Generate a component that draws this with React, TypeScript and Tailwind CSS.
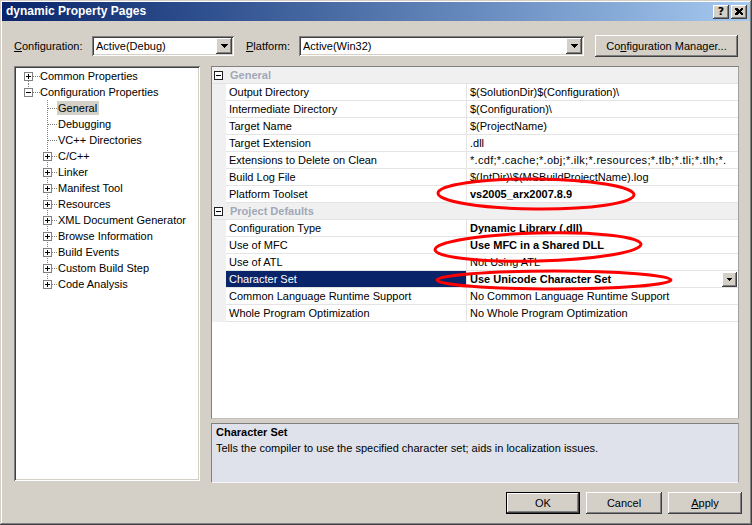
import React from "react";

const raised =
  "shadow-[inset_-1px_-1px_0_#404040,inset_1px_1px_0_#ffffff,inset_-2px_-2px_0_#808080,inset_2px_2px_0_#d4d0c8]";
const sunken =
  "shadow-[inset_1px_1px_0_#808080,inset_-1px_-1px_0_#ffffff,inset_2px_2px_0_#404040,inset_-2px_-2px_0_#d4d0c8]";

function Tri() {
  return (
    <svg width="7" height="4" shapeRendering="crispEdges">
      <rect x="0" y="0" width="7" height="1" fill="#000" />
      <rect x="1" y="1" width="5" height="1" fill="#000" />
      <rect x="2" y="2" width="3" height="1" fill="#000" />
      <rect x="3" y="3" width="1" height="1" fill="#000" />
    </svg>
  );
}

function Combo({ text, w }: { text: string; w: string }) {
  return (
    <div className={`${w} h-[20px] bg-white ${sunken} flex items-center pl-[4px] pr-[2px]`}>
      <span className="flex-1 truncate leading-[14px]">{text}</span>
      <div className={`w-[16px] h-[16px] bg-[#d4d0c8] ${raised} flex items-center justify-center`}>
        <Tri />
      </div>
    </div>
  );
}

function Box({ minus, x, color = "#808080" }: { minus?: boolean; x: number; color?: string }) {
  return (
    <>
      <rect x={x + 0.5} y={4.5} width={8} height={8} fill="#fff" stroke={color} />
      <rect x={x + 2} y={8} width={5} height={1} fill="#000" />
      {!minus && <rect x={x + 4} y={6} width={1} height={5} fill="#000" />}
    </>
  );
}

function TopRow({ label, minus, down }: { label: string; minus?: boolean; down?: boolean }) {
  return (
    <div className="h-[16px] flex items-center">
      <svg width="24" height="16" shapeRendering="crispEdges" className="shrink-0">
        {down ? (
          <line x1="12.5" y1="13" x2="12.5" y2="16" stroke="#808080" strokeDasharray="1 1" />
        ) : (
          <line x1="12.5" y1="0" x2="12.5" y2="4" stroke="#808080" strokeDasharray="1 1" />
        )}
        <line x1="17" y1="8.5" x2="24" y2="8.5" stroke="#808080" strokeDasharray="1 1" />
        <Box minus={minus} x={8} />
      </svg>
      <span className="leading-[14px] whitespace-nowrap">{label}</span>
    </div>
  );
}

function ChildRow({
  label,
  plus,
  last,
  selected,
}: {
  label: string;
  plus?: boolean;
  last?: boolean;
  selected?: boolean;
}) {
  return (
    <div className="h-[16px] flex items-center pl-[24px]">
      <svg width="17" height="16" shapeRendering="crispEdges" className="shrink-0">
        <line x1="7.5" y1="0" x2="7.5" y2={last ? 8 : 16} stroke="#808080" strokeDasharray="1 1" />
        <line x1="8" y1="8.5" x2="17" y2="8.5" stroke="#808080" strokeDasharray="1 1" />
        {plus && <Box x={3} />}
      </svg>
      <span
        className={`leading-[14px] whitespace-nowrap px-[1px] pr-[2px] ${
          selected ? "bg-[#d4d0c8]" : ""
        }`}
      >
        {label}
      </span>
    </div>
  );
}

type Row =
  | { cat: string }
  | { name: string; value: string; bold?: boolean; selected?: boolean; dropdown?: boolean; wide?: boolean };

const rows: Row[] = [
  { cat: "General" },
  { name: "Output Directory", value: "$(SolutionDir)$(Configuration)\\" },
  { name: "Intermediate Directory", value: "$(Configuration)\\" },
  { name: "Target Name", value: "$(ProjectName)" },
  { name: "Target Extension", value: ".dll" },
  {
    name: "Extensions to Delete on Clean",
    value: "*.cdf;*.cache;*.obj;*.ilk;*.resources;*.tlb;*.tli;*.tlh;*.",
    wide: true,
  },
  { name: "Build Log File", value: "$(IntDir)\\$(MSBuildProjectName).log" },
  { name: "Platform Toolset", value: "vs2005_arx2007.8.9", bold: true },
  { cat: "Project Defaults" },
  { name: "Configuration Type", value: "Dynamic Library (.dll)", bold: true },
  { name: "Use of MFC", value: "Use MFC in a Shared DLL", bold: true },
  { name: "Use of ATL", value: "Not Using ATL" },
  { name: "Character Set", value: "Use Unicode Character Set", bold: true, selected: true, dropdown: true },
  { name: "Common Language Runtime Support", value: "No Common Language Runtime Support" },
  { name: "Whole Program Optimization", value: "No Whole Program Optimization" },
];

function GridRow({ r }: { r: Row }) {
  if ("cat" in r) {
    return (
      <div className="h-[17px] flex items-center bg-[#f0f0f0] border-b border-[#e4e4e4]">
        <svg width="14" height="16" shapeRendering="crispEdges" className="shrink-0">
          <Box minus x={2} color="#202020" />
        </svg>
        <span className="pl-[4px] font-bold text-[#a0a8b8] leading-[14px]">{r.cat}</span>
      </div>
    );
  }
  return (
    <div className="h-[17px] flex">
      <div className="w-[14px] shrink-0 bg-[#f0f0f0]" />
      <div
        className={`w-[241px] shrink-0 border-r border-b border-[#e4e4e4] pl-[3px] flex items-center whitespace-nowrap overflow-hidden ${
          r.selected ? "bg-[#0a246a] text-white" : ""
        }`}
      >
        <span className="leading-[14px]">{r.name}</span>
      </div>
      <div className="flex-1 min-w-0 border-b border-[#e4e4e4] pl-[3px] flex items-center">
        <span
          className={`flex-1 whitespace-nowrap leading-[14px] ${r.bold ? "font-bold" : ""} ${
            r.wide ? "tracking-[0.3px]" : ""
          }`}
        >
          {r.value}
        </span>
        {r.dropdown && (
          <div className={`w-[15px] h-[15px] mr-[1px] shrink-0 bg-[#d4d0c8] ${raised} flex items-center justify-center`}>
            <svg width="5" height="3" shapeRendering="crispEdges">
              <rect x="0" y="0" width="5" height="1" fill="#000" />
              <rect x="1" y="1" width="3" height="1" fill="#000" />
              <rect x="2" y="2" width="1" height="1" fill="#000" />
            </svg>
          </div>
        )}
      </div>
    </div>
  );
}

function Btn({ children, w, def }: { children: React.ReactNode; w: string; def?: boolean }) {
  return (
    <div
      className={`${w} h-[22px] bg-[#d4d0c8] flex items-center justify-center ${
        def ? "border border-black shadow-[inset_-1px_-1px_0_#404040,inset_1px_1px_0_#ffffff,inset_-2px_-2px_0_#808080]" : raised
      }`}
    >
      <span className="leading-[14px]">{children}</span>
    </div>
  );
}

export default function App() {
  return (
    <div
      className="relative w-[752px] h-[525px] bg-[#d4d0c8] overflow-hidden text-[11px] text-black font-['Liberation_Sans',Arial,sans-serif] shadow-[inset_-1px_-1px_0_#404040,inset_1px_1px_0_#d4d0c8,inset_-2px_-2px_0_#808080,inset_2px_2px_0_#ffffff] flex flex-col"
    >
      {/* Title bar */}
      <div className="mt-[2px] mx-[2px] h-[19px] bg-gradient-to-r from-[#0a246a] to-[#a6caf0] flex items-center pl-[4px] pr-[3px]">
        <span className="flex-1 text-white font-bold text-[12px] leading-[15px]">dynamic Property Pages</span>
        <div className={`w-[16px] h-[14px] bg-[#d4d0c8] ${raised} flex items-center justify-center`}>
          <span className="font-bold text-[11px] leading-[11px] font-['DejaVu_Sans',sans-serif]">?</span>
        </div>
        <div className={`ml-[2px] w-[16px] h-[14px] bg-[#d4d0c8] ${raised} flex items-center justify-center`}>
          <svg width="8" height="7" shapeRendering="crispEdges">
            <path d="M0 0h2l2 2 2-2h2v1L6 3.5 8 6v1H6L4 5 2 7H0V6l2-2.5L0 1z" fill="#000" />
          </svg>
        </div>
      </div>

      {/* Top controls */}
      <div className="mt-[14px] pl-[14px] h-[22px] flex items-center">
        <span className="w-[78px] leading-[14px]">
          <span className="underline">C</span>onfiguration:
        </span>
        <Combo text="Active(Debug)" w="w-[142px]" />
        <span className="ml-[12px] w-[53px] leading-[14px]">
          <span className="underline">P</span>latform:
        </span>
        <Combo text="Active(Win32)" w="w-[285px]" />
        <div className={`ml-[11px] w-[143px] h-[22px] bg-[#d4d0c8] ${raised} flex items-center justify-center`}>
          <span className="leading-[14px]">
            Co<span className="underline">n</span>figuration Manager...
          </span>
        </div>
      </div>

      {/* Main area */}
      <div className="mt-[9px] pl-[14px] flex items-start">
        <div className={`w-[186px] h-[415px] bg-white ${sunken} pt-[2px] pl-[2px]`}>
          <TopRow label="Common Properties" down />
          <TopRow label="Configuration Properties" minus />
          <ChildRow label="General" selected />
          <ChildRow label="Debugging" />
          <ChildRow label="VC++ Directories" />
          <ChildRow label="C/C++" plus />
          <ChildRow label="Linker" plus />
          <ChildRow label="Manifest Tool" plus />
          <ChildRow label="Resources" plus />
          <ChildRow label="XML Document Generator" plus />
          <ChildRow label="Browse Information" plus />
          <ChildRow label="Build Events" plus />
          <ChildRow label="Custom Build Step" plus />
          <ChildRow label="Code Analysis" plus last />
        </div>

        <div className="ml-[11px] w-[528px] flex flex-col">
          <div className="h-[353px] bg-white border border-[#808080] border-r-[#a0a0a0] border-b-[#c0c0c0] flex flex-col">
            {rows.map((r, i) => (
              <GridRow key={i} r={r} />
            ))}
          </div>
          <div className="mt-[4px] h-[60px] bg-[#dfe2ea] border border-[#808080] border-b-[#f4f4f4] border-r-[#a0a0a0] pl-[4px] pt-[1px]">
            <div className="font-bold leading-[15px]">Character Set</div>
            <div className="leading-[15px] mt-[1px]">
              Tells the compiler to use the specified character set; aids in localization issues.
            </div>
          </div>
        </div>
      </div>

      {/* Buttons */}
      <div className="mt-[9px] pr-[10px] flex justify-end gap-[6px]">
        <Btn w="w-[74px]" def>
          OK
        </Btn>
        <Btn w="w-[76px]">Cancel</Btn>
        <Btn w="w-[74px]">
          <span className="underline">A</span>pply
        </Btn>
      </div>

      {/* Red annotation ellipses */}
      <svg className="absolute left-0 top-0 pointer-events-none" width="752" height="525">
        <ellipse cx="536" cy="194" rx="98" ry="15" fill="none" stroke="#ff0000" strokeWidth="3" transform="rotate(0.5 536 194)" />
        <ellipse cx="538" cy="247" rx="103" ry="14" fill="none" stroke="#ff0000" strokeWidth="3" transform="rotate(-1.5 538 247)" />
        <ellipse cx="554" cy="280" rx="117" ry="9" fill="none" stroke="#ff0000" strokeWidth="3" />
      </svg>
    </div>
  );
}
